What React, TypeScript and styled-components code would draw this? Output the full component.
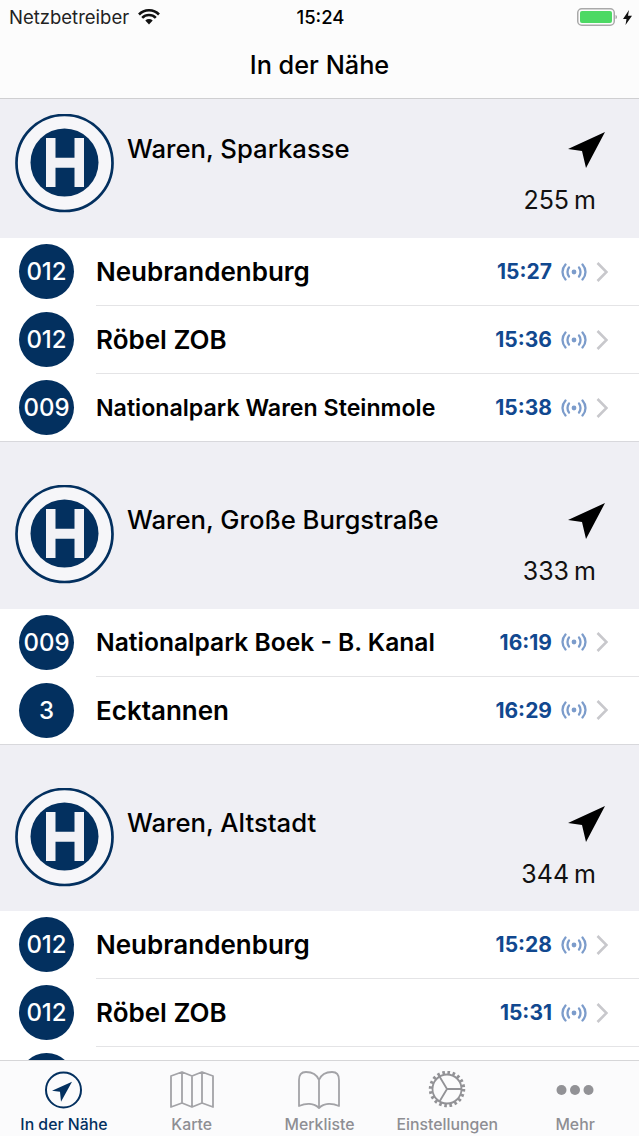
import React from 'react';
import styled, { createGlobalStyle } from 'styled-components';

const GlobalStyle = createGlobalStyle`
  html, body { margin: 0; padding: 0; background: #fff; }
  * { box-sizing: border-box; }
`;

const NAVY = '#03305f';

const Screen = styled.div`
  width: 639px;
  height: 1136px;
  display: flex;
  flex-direction: column;
  overflow: hidden;
  font-family: Inter, 'Liberation Sans', sans-serif;
  color: #000;
  background: #fff;
`;

const TopBar = styled.header`
  flex: none;
  height: 99px;
  background: #fcfcfc;
  border-bottom: 1px solid #cfcfd1;
`;

const StatusBar = styled.div`
  height: 34px;
  padding: 0 7px 0 9px;
  display: grid;
  grid-template-columns: 1fr auto 1fr;
  align-items: center;
  font-size: 18.5px;
`;

const StatusLeft = styled.div`
  display: flex;
  align-items: center;
  gap: 9px;
  color: #222;
`;

const StatusRight = styled.div`
  display: flex;
  justify-content: flex-end;
  align-items: center;
  gap: 5px;
`;

const Clock = styled.div`
  font-weight: 500;
  font-size: 18.5px;
`;

const NavTitle = styled.h1`
  margin: 0;
  padding-top: 3px;
  text-align: center;
  font-size: 25.3px;
  line-height: 56px;
  font-weight: 500;
`;

const Scroller = styled.main`
  flex: 1;
  min-height: 0;
  overflow: hidden;
`;

const StopHeader = styled.div<{ $first?: boolean }>`
  height: ${(p) => (p.$first ? 139 : 166.5)}px;
  padding: ${(p) => (p.$first ? 15 : 43)}px 33px 0 15px;
  background: #efeff4;
  display: flex;
  align-items: flex-start;
`;

const StopBadge = styled.svg`
  flex: none;
  width: 99px;
  height: 99px;
`;

const StopName = styled.div`
  flex: 1;
  margin: 19px 0 0 13px;
  font-size: 25.7px;
  line-height: 32px;
  font-weight: 500;
`;

const Distance = styled.div`
  display: flex;
  flex-direction: column;
  align-items: flex-end;
  gap: 15px;
  padding-top: 18px;
`;

const DistanceValue = styled.div`
  margin-right: 10px;
  font-size: 25px;
  line-height: 32px;
  word-spacing: -2px;
  color: #111;
`;

const Row = styled.div<{ $last?: boolean }>`
  height: 68px;
  padding-left: 19px;
  padding-bottom: ${(p) => (p.$last ? 0 : 1)}px;
  display: flex;
  align-items: center;
  background: #fff;
  border-bottom: ${(p) => (p.$last ? '1px solid #d8d8dc' : 'none')};
`;

const LineDisc = styled.div`
  flex: none;
  width: 55px;
  height: 55px;
  border-radius: 50%;
  background: ${NAVY};
  color: #fff;
  display: flex;
  align-items: center;
  justify-content: center;
  font-size: 24px;
  font-weight: 500;
`;

const RowBody = styled.div<{ $last?: boolean }>`
  flex: 1;
  align-self: stretch;
  margin-left: 22px;
  margin-bottom: ${(p) => (p.$last ? 0 : -1)}px;
  padding-right: 31px;
  display: flex;
  align-items: center;
  border-bottom: ${(p) => (p.$last ? 'none' : '1px solid #e4e4e6')};
`;

const Destination = styled.div<{ $size: number }>`
  flex: 1;
  font-size: ${(p) => p.$size}px;
  font-weight: 600;
  white-space: nowrap;
`;

const Departure = styled.div`
  color: #11488f;
  font-size: 21px;
  font-weight: 700;
  margin-right: 9px;
`;

const LiveIcon = styled.svg`
  flex: none;
  width: 26px;
  height: 18px;
  margin-right: 9px;
`;

const Chevron = styled.svg`
  flex: none;
  width: 12px;
  height: 20px;
`;

const TabBar = styled.nav`
  flex: none;
  height: 76px;
  background: #fbfbfc;
  border-top: 1px solid #d6d6d8;
  display: grid;
  grid-template-columns: repeat(5, 1fr);
`;

const Tab = styled.div<{ $active?: boolean }>`
  display: flex;
  flex-direction: column;
  align-items: center;
  padding-top: 10px;
  font-size: 15.8px;
  line-height: 18px;
  color: ${(p) => (p.$active ? NAVY : '#8e8e93')};
  font-weight: 500;
  white-space: nowrap;
`;

const TabIcon = styled.svg`
  width: 44px;
  height: 38px;
  margin-bottom: 7px;
`;

const Arrow = () => (
  <svg width="38" height="37" viewBox="0 0 38 37">
    <path d="M37 0 0 17l14 2 4 17z" fill="#000" />
  </svg>
);

const Badge = () => (
  <StopBadge viewBox="0 0 99 99">
    <circle cx="49.5" cy="49" r="48" fill="#f6f6f9" stroke={NAVY} strokeWidth="2.700" />
    <circle cx="49.5" cy="48.500" r="34" fill={NAVY} />
    <path d="M31 24h9.500v19.700h19V24H69v49h-9.500V53.700h-19V73H31z" fill="#f2f2f6" />
  </StopBadge>
);

const Live = () => (
  <LiveIcon viewBox="0 0 26 18" fill="none" stroke="#7c9ccb" strokeWidth="2.300" strokeLinecap="round">
    <circle cx="13" cy="9" r="2.400" fill="#7c9ccb" stroke="none" />
    <path d="M8 4.500c-2 2.500-2 6.500 0 9M18 4.500c2 2.500 2 6.500 0 9" />
    <path d="M4.500 1.500c-4 4.500-4 10.500 0 15M21.500 1.500c4 4.500 4 10.500 0 15" />
  </LiveIcon>
);

const Departures = ({ line, to, size = 26, time, last }: { line: string; to: string; size?: number; time: string; last?: boolean }) => (
  <Row $last={last}>
    <LineDisc>{line}</LineDisc>
    <RowBody $last={last}>
      <Destination $size={size}>{to}</Destination>
      <Departure>{time}</Departure>
      <Live />
      <Chevron viewBox="0 0 12 20" fill="none" stroke="#c8c8cc" strokeWidth="2.600">
        <path d="M1.500 1 10.500 10l-9 9" />
      </Chevron>
    </RowBody>
  </Row>
);

const Stop = ({ name, distance, first }: { name: string; distance: string; first?: boolean }) => (
  <StopHeader $first={first}>
    <Badge />
    <StopName>{name}</StopName>
    <Distance>
      <Arrow />
      <DistanceValue>{distance}</DistanceValue>
    </Distance>
  </StopHeader>
);

export default function App() {
  return (
    <Screen>
      <GlobalStyle />
      <TopBar>
        <StatusBar>
          <StatusLeft>
            Netzbetreiber
            <svg width="22" height="16" viewBox="0 0 22 16">
              <path d="M11 15.500 7.300 11.500a5.500 5.500 0 0 1 7.400 0z" fill="#111" />
              <path d="M1 5.500a14 14 0 0 1 20 0M4.200 8.800a9.500 9.500 0 0 1 13.600 0" fill="none" stroke="#111" strokeWidth="2.600" />
            </svg>
          </StatusLeft>
          <Clock>15:24</Clock>
          <StatusRight>
            <svg width="41" height="18" viewBox="0 0 41 18">
              <rect x="0.750" y="0.750" width="36.500" height="16.500" rx="4" fill="none" stroke="#a9a9a9" strokeWidth="1.500" />
              <rect x="3" y="3" width="32" height="12" rx="2" fill="#4cd964" />
              <path d="M38.500 7v4c1 0 1.500-1 1.500-2s-.5-2-1.500-2z" fill="#a9a9a9" />
            </svg>
            <svg width="9" height="15" viewBox="0 0 9 15">
              <path d="M6 0 0 9h3.500L2.500 15 9 5.800H5z" fill="#111" />
            </svg>
          </StatusRight>
        </StatusBar>
        <NavTitle>In der Nähe</NavTitle>
      </TopBar>
      <Scroller>
        <Stop first name="Waren, Sparkasse" distance="255 m" />
        <Departures line="012" to="Neubrandenburg" time="15:27" />
        <Departures line="012" to="Röbel ZOB" time="15:36" />
        <Departures line="009" to="Nationalpark Waren Steinmole" size={23.2} time="15:38" last />
        <Stop name="Waren, Große Burgstraße" distance="333 m" />
        <Departures line="009" to="Nationalpark Boek - B. Kanal" size={24.6} time="16:19" />
        <Departures line="3" to="Ecktannen" time="16:29" last />
        <Stop name="Waren, Altstadt" distance="344 m" />
        <Departures line="012" to="Neubrandenburg" time="15:28" />
        <Departures line="012" to="Röbel ZOB" time="15:31" />
        <Row>
          <LineDisc />
        </Row>
      </Scroller>
      <TabBar>
        <Tab $active>
          <TabIcon viewBox="0 0 44 38">
            <circle cx="21.500" cy="19" r="17.500" fill="none" stroke={NAVY} strokeWidth="2" />
            <path d="M30 10.700 10 19.700l8 1 1 10z" fill={NAVY} />
          </TabIcon>
          In der Nähe
        </Tab>
        <Tab>
          <TabIcon viewBox="0 0 44 38" fill="none" stroke="#a3a3a7" strokeWidth="1.800" strokeLinejoin="round">
            <path d="M1 5 12 1l10 4 10-4 11 4v31l-11-4-10 4-10-4-11 4zM12 1v31M22 5v31M32 1v31" />
          </TabIcon>
          Karte
        </Tab>
        <Tab>
          <TabIcon viewBox="0 0 44 38" fill="none" stroke="#a3a3a7" strokeWidth="1.800" strokeLinejoin="round">
            <path d="M22 9C20 4 15 1 9 1 4 1 2 4 2 9v26c7-3 15-3 20 2 5-5 13-5 20-2V9c0-5-2-8-7-8-6 0-11 3-13 8zM22 9v28" />
          </TabIcon>
          Merkliste
        </Tab>
        <Tab>
          <TabIcon viewBox="0 0 44 38" fill="none" stroke="#929296" strokeWidth="1.800">
            <circle cx="22" cy="18" r="14.500" />
            <circle cx="22" cy="18" r="16.500" strokeWidth="3.500" strokeDasharray="2.600 2.580" />
            <path d="M22 18h14.500M22 18 14.500 5.500M22 18l-7.500 12.500" />
          </TabIcon>
          Einstellungen
        </Tab>
        <Tab>
          <TabIcon viewBox="0 0 44 38" fill="#929296">
            <circle cx="8.500" cy="19" r="5" />
            <circle cx="22" cy="19" r="5" />
            <circle cx="35.500" cy="19" r="5" />
          </TabIcon>
          Mehr
        </Tab>
      </TabBar>
    </Screen>
  );
}
